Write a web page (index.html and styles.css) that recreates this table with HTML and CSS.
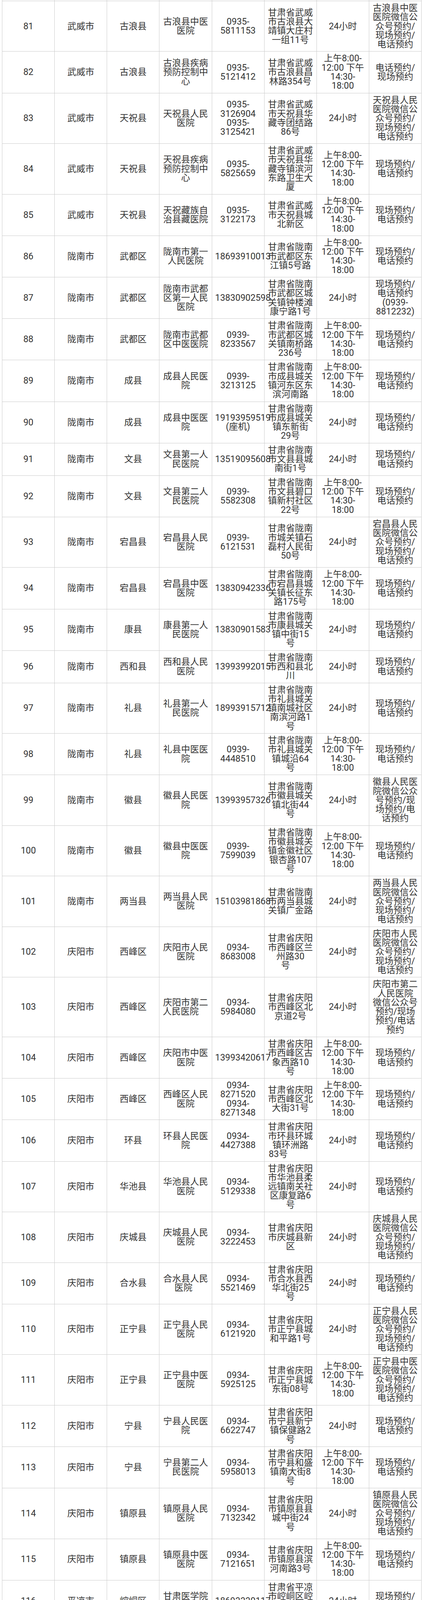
FILE: index.html
```html
<!DOCTYPE html>
<html lang="zh-CN">
<head>
<meta charset="utf-8">
<title>医院名单</title>
<link rel="stylesheet" href="styles.css">
</head>
<body>
<table class="sheet">
<colgroup><col><col><col><col><col><col><col><col></colgroup>
<tbody>
<tr class="stub"><td></td><td></td><td></td><td></td><td></td><td></td><td></td><td></td></tr>
<tr><td>81</td><td>武威市</td><td>古浪县</td><td>古浪县中医<br>医院</td><td>0935-<br>5811153</td><td>甘肃省武威<br>市古浪县大<br>靖镇大庄村<br>一组11号</td><td>24小时</td><td>古浪县中医<br>医院微信公<br>众号预约/<br>现场预约/<br>电话预约</td></tr>
<tr><td>82</td><td>武威市</td><td>古浪县</td><td>古浪县疾病<br>预防控制中<br>心</td><td>0935-<br>5121412</td><td>甘肃省武威<br>市古浪县昌<br>林路354号</td><td>上午8:00-<br>12:00 下午<br>14:30-<br>18:00</td><td>电话预约/<br>现场预约</td></tr>
<tr><td>83</td><td>武威市</td><td>天祝县</td><td>天祝县人民<br>医院</td><td>0935-<br>3126904<br>0935-<br>3125421</td><td>甘肃省武威<br>市天祝县华<br>藏寺团结路<br>86号</td><td>24小时</td><td>天祝县人民<br>医院微信公<br>众号预约/<br>现场预约/<br>电话预约</td></tr>
<tr><td>84</td><td>武威市</td><td>天祝县</td><td>天祝县疾病<br>预防控制中<br>心</td><td>0935-<br>5825659</td><td>甘肃省武威<br>市天祝县华<br>藏寺镇滨河<br>东路卫生大<br>厦</td><td>上午8:00-<br>12:00 下午<br>14:30-<br>18:00</td><td>现场预约/<br>电话预约</td></tr>
<tr><td>85</td><td>武威市</td><td>天祝县</td><td>天祝藏族自<br>治县藏医院</td><td>0935-<br>3122173</td><td>甘肃省武威<br>市天祝县城<br>北新区</td><td>上午8:00-<br>12:00 下午<br>14:30-<br>18:00</td><td>现场预约/<br>电话预约</td></tr>
<tr><td>86</td><td>陇南市</td><td>武都区</td><td>陇南市第一<br>人民医院</td><td>18693910013</td><td>甘肃省陇南<br>市武都区东<br>江镇5号路</td><td>上午8:00-<br>12:00 下午<br>14:30-<br>18:00</td><td>现场预约/<br>电话预约</td></tr>
<tr><td>87</td><td>陇南市</td><td>武都区</td><td>陇南市武都<br>区第一人民<br>医院</td><td>13830902598</td><td>甘肃省陇南<br>市武都区城<br>关镇钟楼滩<br>康宁路1号</td><td>24小时</td><td>现场预约/<br>电话预约<br>(0939-<br>8812232)</td></tr>
<tr><td>88</td><td>陇南市</td><td>武都区</td><td>陇南市武都<br>区中医医院</td><td>0939-<br>8233567</td><td>甘肃省陇南<br>市武都区城<br>关镇南桥路<br>236号</td><td>上午8:00-<br>12:00 下午<br>14:30-<br>18:00</td><td>现场预约/<br>电话预约</td></tr>
<tr><td>89</td><td>陇南市</td><td>成县</td><td>成县人民医<br>院</td><td>0939-<br>3213125</td><td>甘肃省陇南<br>市成县城关<br>镇河东区东<br>滨河南路</td><td>上午8:00-<br>12:00 下午<br>14:30-<br>18:00</td><td>现场预约/<br>电话预约</td></tr>
<tr><td>90</td><td>陇南市</td><td>成县</td><td>成县中医医<br>院</td><td>19193959519<br>(座机)</td><td>甘肃省陇南<br>市成县城关<br>镇东新街<br>29号</td><td>24小时</td><td>现场预约/<br>电话预约</td></tr>
<tr><td>91</td><td>陇南市</td><td>文县</td><td>文县第一人<br>民医院</td><td>13519095608</td><td>甘肃省陇南<br>市文县县城<br>南街1号</td><td>24小时</td><td>现场预约/<br>电话预约</td></tr>
<tr><td>92</td><td>陇南市</td><td>文县</td><td>文县第二人<br>民医院</td><td>0939-<br>5582308</td><td>甘肃省陇南<br>市文县碧口<br>镇新村社区<br>22号</td><td>上午8:00-<br>12:00 下午<br>14:30-<br>18:00</td><td>现场预约/<br>电话预约</td></tr>
<tr><td>93</td><td>陇南市</td><td>宕昌县</td><td>宕昌县人民<br>医院</td><td>0939-<br>6121531</td><td>甘肃省陇南<br>市城关镇石<br>磊村人民街<br>50号</td><td>24小时</td><td>宕昌县人民<br>医院微信公<br>众号预约/<br>现场预约/<br>电话预约</td></tr>
<tr><td>94</td><td>陇南市</td><td>宕昌县</td><td>宕昌县中医<br>医院</td><td>13830942336</td><td>甘肃省陇南<br>市宕昌县城<br>关镇长征东<br>路175号</td><td>上午8:00-<br>12:00 下午<br>14:30-<br>18:00</td><td>现场预约/<br>电话预约</td></tr>
<tr><td>95</td><td>陇南市</td><td>康县</td><td>康县第一人<br>民医院</td><td>13830901583</td><td>甘肃省陇南<br>市康县城关<br>镇中街15<br>号</td><td>24小时</td><td>现场预约/<br>电话预约</td></tr>
<tr><td>96</td><td>陇南市</td><td>西和县</td><td>西和县人民<br>医院</td><td>13993992015</td><td>甘肃省陇南<br>市西和县北<br>川</td><td>24小时</td><td>现场预约/<br>电话预约</td></tr>
<tr><td>97</td><td>陇南市</td><td>礼县</td><td>礼县第一人<br>民医院</td><td>18993915712</td><td>甘肃省陇南<br>市礼县城关<br>镇南城社区<br>南滨河路1<br>号</td><td>24小时</td><td>现场预约/<br>电话预约</td></tr>
<tr><td>98</td><td>陇南市</td><td>礼县</td><td>礼县中医医<br>院</td><td>0939-<br>4448510</td><td>甘肃省陇南<br>市礼县城关<br>镇城沿64<br>号</td><td>上午8:00-<br>12:00 下午<br>14:30-<br>18:00</td><td>现场预约/<br>电话预约</td></tr>
<tr><td>99</td><td>陇南市</td><td>徽县</td><td>徽县人民医<br>院</td><td>13993957326</td><td>甘肃省陇南<br>市徽县城关<br>镇北街44<br>号</td><td>24小时</td><td>徽县人民医<br>院微信公众<br>号预约/现<br>场预约/电<br>话预约</td></tr>
<tr><td>100</td><td>陇南市</td><td>徽县</td><td>徽县中医医<br>院</td><td>0939-<br>7599039</td><td>甘肃省陇南<br>市徽县城关<br>镇金徽社区<br>银杏路107<br>号</td><td>上午8:00-<br>12:00 下午<br>14:30-<br>18:00</td><td>现场预约/<br>电话预约</td></tr>
<tr><td>101</td><td>陇南市</td><td>两当县</td><td>两当县人民<br>医院</td><td>15103981868</td><td>甘肃省陇南<br>市两当县城<br>关镇广金路</td><td>24小时</td><td>两当县人民<br>医院微信公<br>众号预约/<br>现场预约/<br>电话预约</td></tr>
<tr><td>102</td><td>庆阳市</td><td>西峰区</td><td>庆阳市人民<br>医院</td><td>0934-<br>8683008</td><td>甘肃省庆阳<br>市西峰区兰<br>州路30<br><span class="tail-md">号</span></td><td>24小时</td><td>庆阳市人民<br>医院微信公<br>众号预约/<br>现场预约/<br>电话预约</td></tr>
<tr><td>103</td><td>庆阳市</td><td>西峰区</td><td>庆阳市第二<br><span class="tail-md">人民医院</span></td><td>0934-<br>5984080</td><td>甘肃省庆阳<br>市西峰区北<br>京道2号</td><td>24小时</td><td>庆阳市第二<br>人民医院<br>微信公众号<br>预约/现场<br>预约/电话<br>预约</td></tr>
<tr><td>104</td><td>庆阳市</td><td>西峰区</td><td>庆阳市中医<br>医院</td><td>13993420617</td><td>甘肃省庆阳<br>市西峰区古<br>象西路10<br>号</td><td>上午8:00-<br>12:00 下午<br>14:30-<br>18:00</td><td>现场预约/<br>电话预约</td></tr>
<tr><td>105</td><td>庆阳市</td><td>西峰区</td><td>西峰区人民<br>医院</td><td>0934-<br>8271520<br>0934-<br>8271348</td><td>甘肃省庆阳<br>市西峰区北<br>大街31号</td><td>上午8:00-<br>12:00 下午<br>14:30-<br>18:00</td><td>现场预约/<br>电话预约</td></tr>
<tr><td>106</td><td>庆阳市</td><td>环县</td><td>环县人民医<br>院</td><td>0934-<br>4427388</td><td>甘肃省庆阳<br>市环县环城<br>镇环洲路<br><span class="tail-lg">83号</span></td><td>24小时</td><td>现场预约/<br>电话预约</td></tr>
<tr><td>107</td><td>庆阳市</td><td>华池县</td><td>华池县人民<br>医院</td><td>0934-<br>5129338</td><td>甘肃省庆阳<br>市华池县柔<br>远镇南关社<br>区康复路6<br>号</td><td>24小时</td><td>现场预约/<br>电话预约</td></tr>
<tr><td>108</td><td>庆阳市</td><td>庆城县</td><td>庆城县人民<br>医院</td><td>0934-<br>3222453</td><td>甘肃省庆阳<br>市庆城县新<br>区</td><td>24小时</td><td>庆城县人民<br>医院微信公<br>众号预约/<br>现场预约/<br>电话预约</td></tr>
<tr><td>109</td><td>庆阳市</td><td>合水县</td><td>合水县人民<br><span class="tail-sm">医院</span></td><td>0934-<br>5521469</td><td>甘肃省庆阳<br>市合水县西<br>华北街25<br>号</td><td>24小时</td><td>现场预约/<br>电话预约</td></tr>
<tr><td>110</td><td>庆阳市</td><td>正宁县</td><td>正宁县人民<br>医院</td><td>0934-<br>6121920</td><td>甘肃省庆阳<br>市正宁县城<br>和平路1号</td><td>24小时</td><td>正宁县人民<br>医院微信公<br>众号预约/<br>现场预约/<br>电话预约</td></tr>
<tr><td>111</td><td>庆阳市</td><td>正宁县</td><td>正宁县中医<br>医院</td><td>0934-<br>5925125</td><td>甘肃省庆阳<br>市正宁县城<br>东街08号</td><td>上午8:00-<br>12:00 下午<br>14:30-<br>18:00</td><td>正宁县中医<br>医院微信公<br>众号预约/<br>现场预约/<br>电话预约</td></tr>
<tr><td>112</td><td>庆阳市</td><td>宁县</td><td>宁县人民医<br>院</td><td>0934-<br>6622747</td><td>甘肃省庆阳<br>市宁县新宁<br>镇保健路2<br>号</td><td>24小时</td><td>现场预约/<br>电话预约</td></tr>
<tr><td>113</td><td>庆阳市</td><td>宁县</td><td>宁县第二人<br>民医院</td><td>0934-<br>5958013</td><td>甘肃省庆阳<br>市宁县和盛<br>镇南大街8<br>号</td><td>上午8:00-<br>12:00 下午<br>14:30-<br>18:00</td><td>现场预约/<br>电话预约</td></tr>
<tr><td>114</td><td>庆阳市</td><td>镇原县</td><td>镇原县人民<br>医院</td><td>0934-<br>7132342</td><td>甘肃省庆阳<br>市镇原县县<br>城中街24<br>号</td><td>24小时</td><td>镇原县人民<br>医院微信公<br>众号预约/<br>现场预约/<br>电话预约</td></tr>
<tr><td>115</td><td>庆阳市</td><td>镇原县</td><td>镇原县中医<br>医院</td><td>0934-<br>7121651</td><td>甘肃省庆阳<br>市镇原县滨<br>河南路3号</td><td>上午8:00-<br>12:00 下午<br>14:30-<br>18:00</td><td>现场预约/<br>电话预约</td></tr>
<tr><td>116</td><td>平凉市</td><td>崆峒区</td><td>甘肃医学院<br>附属医院</td><td>18693330117</td><td>甘肃省平凉<br>市崆峒区崆<br>峒东路296<br>号</td><td>24小时</td><td>现场预约/<br>电话预约</td></tr>
<tr><td>117</td><td>平凉市</td><td>崆峒区</td><td>平凉市平凉<br>天泰医院</td><td>0933-<br>8888019</td><td>甘肃省平凉<br>市崆峒区太<br>统路18号</td><td>上午8:00-<br>12:00 下午<br>14:30-<br>18:00</td><td>现场预约/<br>电话预约</td></tr>
<tr><td>118</td><td>平凉市</td><td>华亭市</td><td>华亭市第一<br>人民医院</td><td>15809441691</td><td>甘肃省平凉<br>市华亭市西<br>华镇汭南大<br>道22号</td><td>24小时</td><td>现场预约/<br>电话预约</td></tr>
<tr><td>119</td><td>平凉市</td><td>华亭市</td><td>华亭市第二<br>人民医院</td><td>13993314427</td><td>甘肃省平凉<br>市华亭市西<br>大街55号</td><td>上午8:00-<br>12:00 下午<br>14:30-<br>18:00</td><td>现场预约/<br>电话预约</td></tr>
<tr><td>120</td><td>平凉市</td><td>华亭市</td><td>华亭市中医<br>医院</td><td>18093318778</td><td>甘肃省平凉<br>市华亭市南<br>新街217号</td><td>上午8:00-<br>12:00 下午<br>14:30-<br>18:00</td><td>现场预约/<br>电话预约</td></tr>
<tr class="tail"><td></td><td></td><td></td><td></td><td></td><td>甘肃省平凉</td><td></td><td></td></tr>
</tbody>
</table>
</body>
</html>
```

FILE: styles.css
```css
html, body {
  margin: 0;
  padding: 0;
  background: #ffffff;
}

.sheet {
  margin-left: 5px;
  width: 1074px;
  border-collapse: collapse;
  table-layout: fixed;
  font-family: Roboto, "Noto Sans CJK SC", sans-serif;
  font-size: 23px;
  line-height: 23.3px;
  color: #333333;
}

.sheet col {
  width: 12.5%;
}

.sheet td {
  border: 1px solid #cccccc;
  padding: 6px 8px;
  text-align: center;
  vertical-align: middle;
  white-space: nowrap;
}

.sheet .stub td {
  border-top: 0;
  padding: 0;
  height: 2px;
}

.sheet .tail td {
  border-bottom: 0;
}

.tail-sm {
  padding-right: 11px;
}

.tail-md {
  padding-right: 25px;
}

.tail-lg {
  padding-right: 62px;
}
```
